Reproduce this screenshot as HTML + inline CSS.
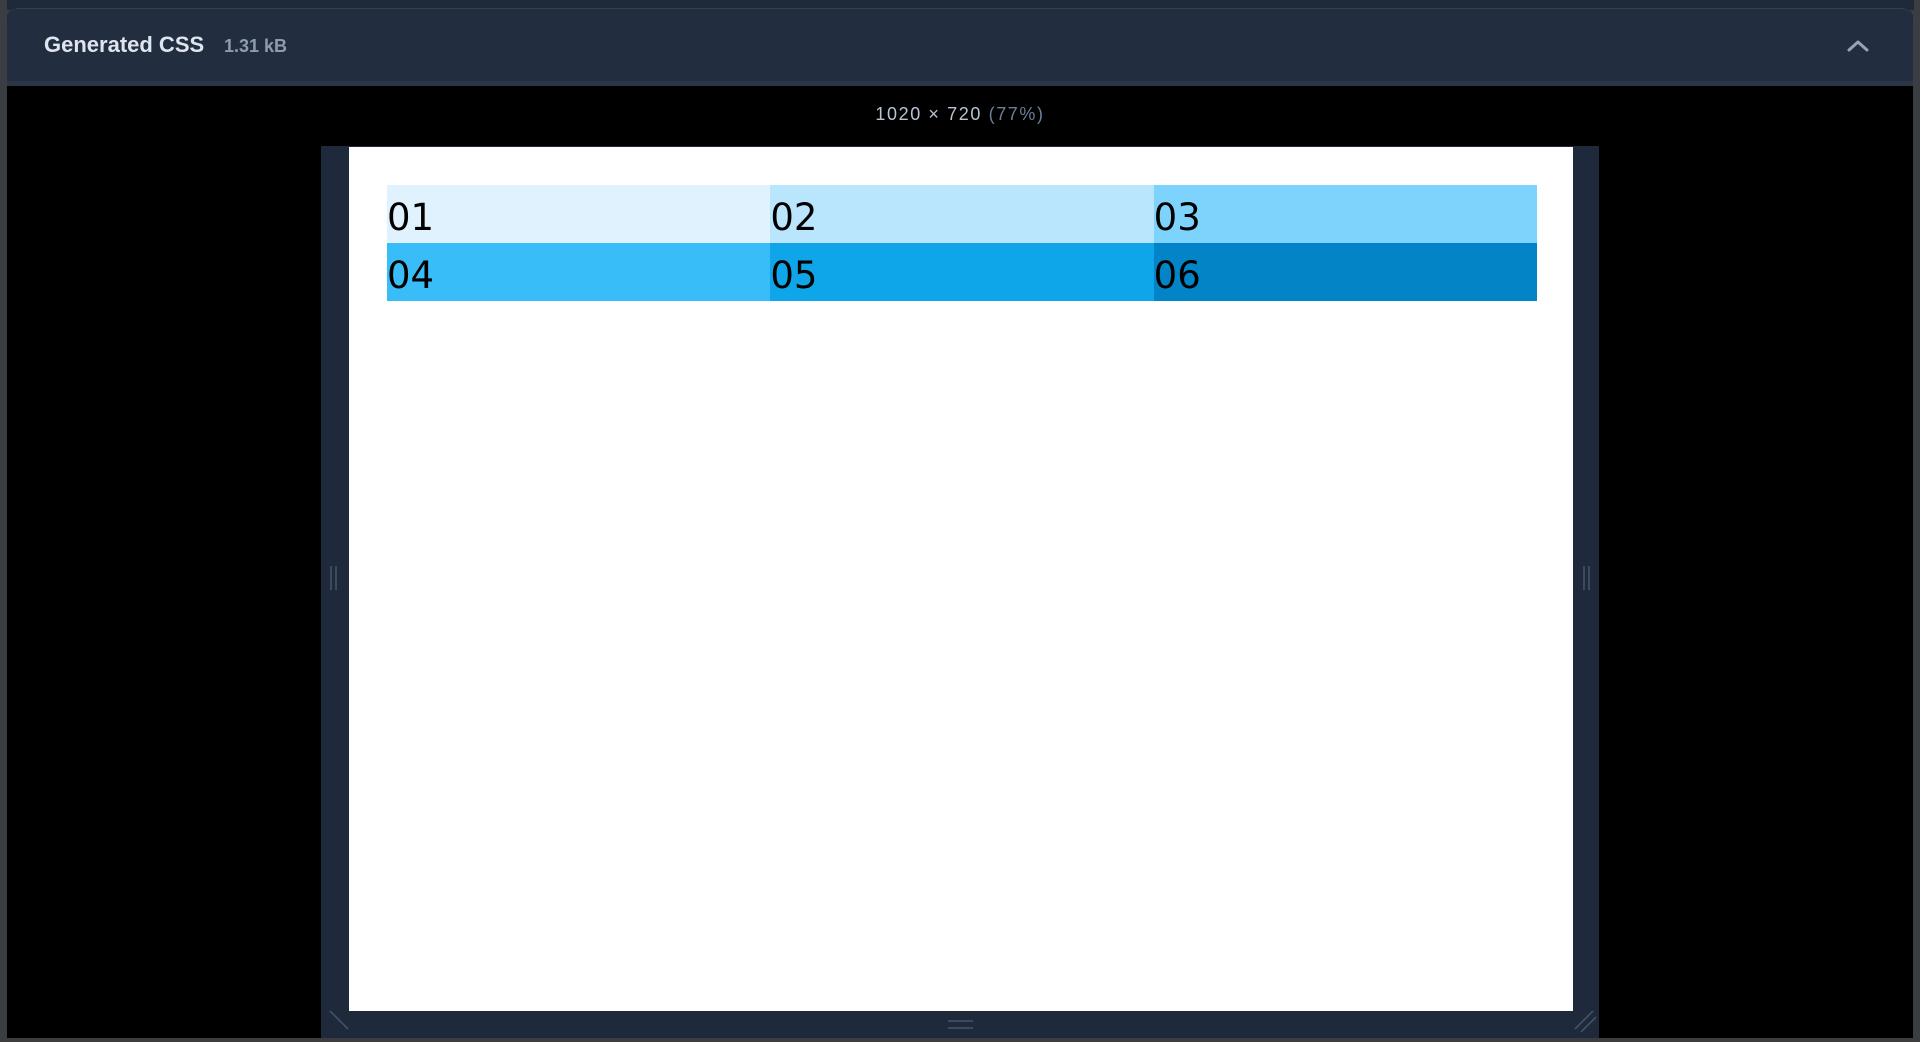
<!DOCTYPE html>
<html><head><meta charset="utf-8"><style>
html,body{margin:0;padding:0;width:1920px;height:1042px;overflow:hidden;background:#3a3d42;font-family:"Liberation Sans",sans-serif}
.top{position:absolute;left:7px;top:0;width:1907px;height:10px;background:#1e2939}
.wrap{position:absolute;left:7px;top:8px;width:1906px;height:1030px;background:#000;border-radius:10px 10px 0 0;overflow:hidden}
.hdr{position:absolute;left:0;top:0;width:1906px;height:72px;background:#222d3f;border-top:1px solid #334155;border-bottom:5px solid #2a3547;border-radius:10px 10px 0 0}
.t1{position:absolute;left:37px;top:23px;font-size:22px;font-weight:bold;color:#dfe5ee}
.t2{position:absolute;left:217px;top:27px;font-size:18px;font-weight:bold;color:#8e9bb0}
.dim{position:absolute;left:0;width:1920px;top:104px;text-align:center;font-size:18px;color:#b8c4d4;letter-spacing:1.6px}
.dim span{color:#6b7f9a}
.frame{position:absolute;left:321px;top:146px;width:1278px;height:892px;background:#1e293b}
.white{position:absolute;left:349px;top:147px;width:1224px;height:864px;background:#fff}
table{position:absolute;left:387px;top:185px;border-collapse:collapse;width:1150px}
td{width:383px;height:58px;padding:0 0 2px 0;box-sizing:border-box;font-size:37px;color:#000;vertical-align:bottom;line-height:46px;font-family:"DejaVu Sans","Liberation Sans",sans-serif}
</style></head><body>
<div class="top"></div>
<div class="wrap">
<div class="hdr"><div class="t1">Generated CSS</div><div class="t2">1.31 kB</div>
<svg style="position:absolute;left:1840px;top:30px" width="22" height="14"><path d="M2 11 L11 3 L20 11" stroke="#94a3b8" stroke-width="3" fill="none" stroke-linecap="round" stroke-linejoin="round"/></svg>
</div>
</div>
<div class="dim">1020 × 720 <span>(77%)</span></div>
<div class="frame"></div>
<div class="white"></div>
<table>
<tr><td style="background:#e0f2fe">01</td><td style="background:#bae6fd">02</td><td style="background:#7dd3fc">03</td></tr>
<tr><td style="background:#38bdf8">04</td><td style="background:#0ea5e9">05</td><td style="background:#0284c7">06</td></tr>
</table>
<svg style="position:absolute;left:0;top:0" width="1920" height="1042">
<g stroke="#475569" stroke-width="1.5">
<line x1="331" y1="566" x2="331" y2="590"/><line x1="336" y1="566" x2="336" y2="590"/>
<line x1="1584" y1="566" x2="1584" y2="590"/><line x1="1589" y1="566" x2="1589" y2="590"/>
<line x1="948" y1="1021" x2="973" y2="1021"/><line x1="948" y1="1028" x2="973" y2="1028"/>
<line x1="330" y1="1011" x2="348" y2="1029"/>
<line x1="1575" y1="1029" x2="1593" y2="1011"/><line x1="1581" y1="1032" x2="1596" y2="1017"/>
</g></svg>
</body></html>
